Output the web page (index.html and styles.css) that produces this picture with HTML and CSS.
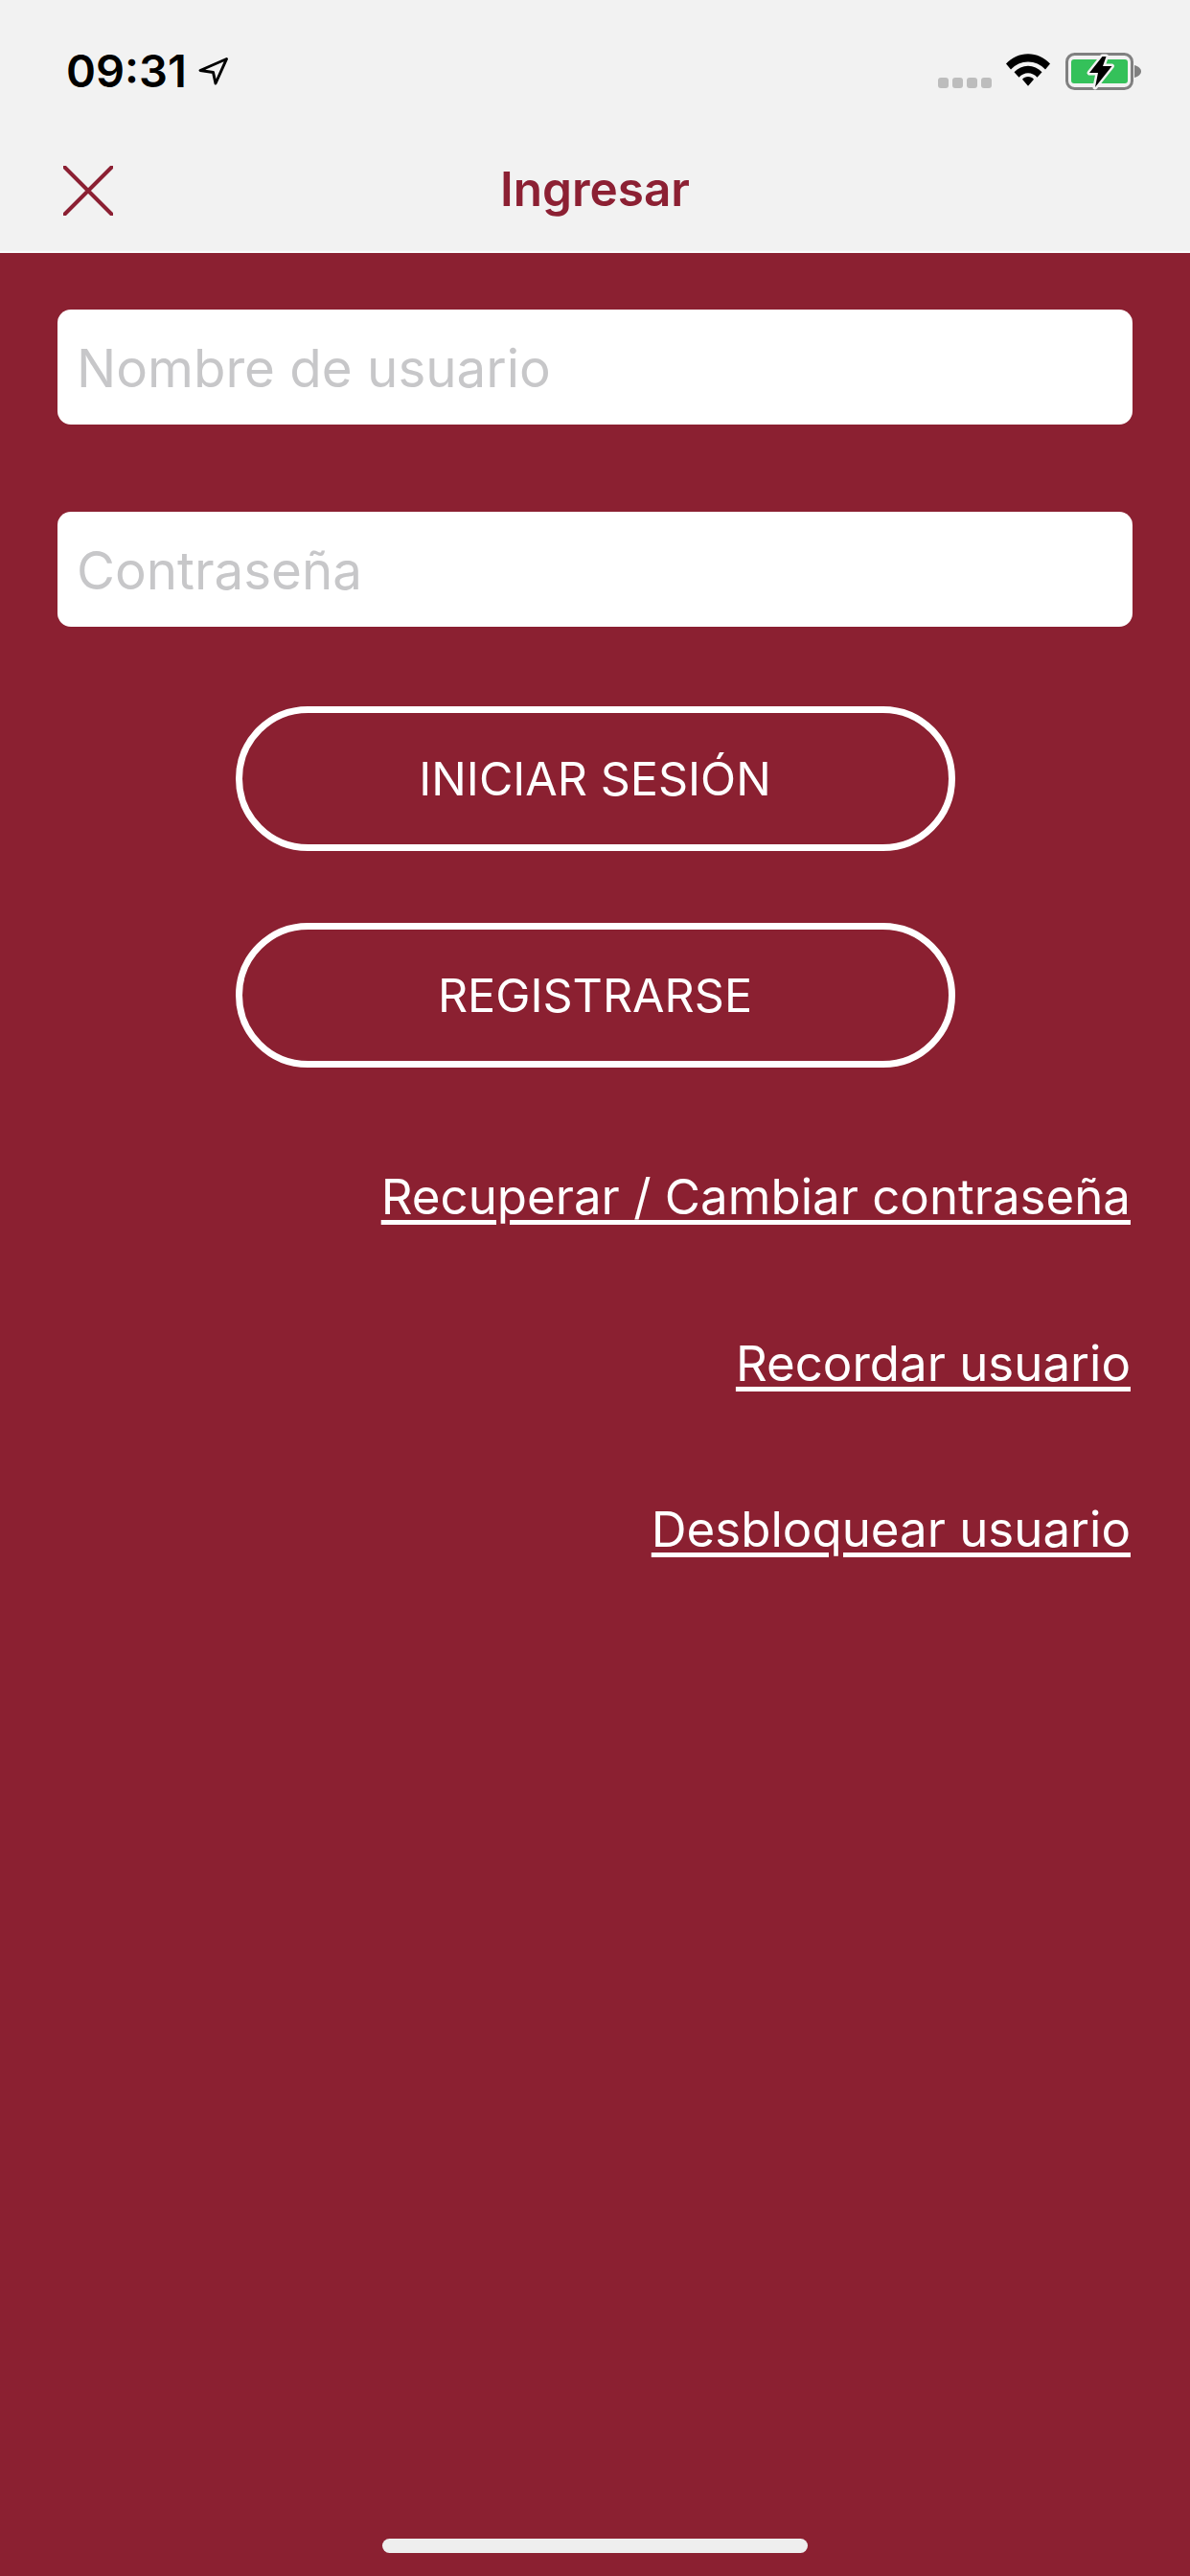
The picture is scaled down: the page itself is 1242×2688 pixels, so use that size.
FILE: index.html
```html
<!DOCTYPE html>
<html lang="es">
<head>
<meta charset="utf-8">
<title>Ingresar</title>
<link rel="stylesheet" href="styles.css">
</head>
<body>
<div class="screen">
  <header class="top">
    <div class="status">
      <div class="status-left">
        <span class="time">09:31</span>
        <svg class="arrow" viewBox="0 0 36 36" width="36" height="36"><path d="M31.500 4.500L4 16.500L17.500 18.500L20 30Z" fill="none" stroke="#000" stroke-width="3" stroke-linejoin="round"/></svg>
      </div>
      <div class="status-right">
        <div class="signal"><i></i><i></i><i></i><i></i></div>
        <svg class="wifi" viewBox="0 0 48 36" width="48" height="39" preserveAspectRatio="none"><path d="M24 3C15 3 7 6.500 1 12.500L6 18C11 13 17 10.500 24 10.500S37 13 42 18L47 12.500C41 6.500 33 3 24 3Z M24 14.500C18.500 14.500 13.500 16.500 9.500 20.500L14.500 25.500C17 23 20.500 21.500 24 21.500S31 23 33.500 25.500L38.500 20.500C34.500 16.500 29.500 14.500 24 14.500Z M24 25C21.500 25 19.500 26 18 27.500L24 34L30 27.500C28.500 26 26.500 25 24 25Z" fill="#000"/></svg>
        <svg class="battery" viewBox="0 0 82 44" width="82" height="44">
          <rect x="3.500" y="3.500" width="68" height="36" rx="8" fill="none" stroke="#808080" stroke-width="3"/>
          <rect x="8" y="9" width="59" height="25" rx="3" fill="#34c15a"/>
          <path d="M74 15C78 16 81 18.500 81 21.500S78 27 74 28Z" fill="#808080"/>
          <path d="M40.500 6L27 23H36L33 38L50.500 16H41L44.500 6Z" fill="#000" stroke="#f2f2f2" stroke-width="5" stroke-linejoin="round" paint-order="stroke"/>
        </svg>
      </div>
    </div>
    <nav class="nav">
      <svg class="close" viewBox="0 0 52 52" width="52" height="52"><path d="M1.500 1.500L50.500 50.500M50.500 1.500L1.500 50.500" stroke="#8c2033" stroke-width="4" stroke-linecap="round"/></svg>
      <h1 class="title">Ingresar</h1>
    </nav>
  </header>
  <main class="body">
    <div class="fields">
      <div class="field">Nombre de usuario</div>
      <div class="field">Contraseña</div>
    </div>
    <div class="actions">
      <a class="pill">INICIAR SESIÓN</a>
      <a class="pill">REGISTRARSE</a>
    </div>
    <div class="links">
      <a class="link">Recuperar / Cambiar contraseña</a>
      <a class="link">Recordar usuario</a>
      <a class="link">Desbloquear usuario</a>
    </div>
    <div class="home"></div>
  </main>
</div>
</body>
</html>
```
FILE: styles.css
```css
* { box-sizing: border-box; }
html, body { margin: 0; padding: 0; }
body { width: 1242px; height: 2688px; overflow: hidden; font-family: Inter, "Liberation Sans", sans-serif; }
.screen { width: 1242px; height: 2688px; display: flex; flex-direction: column; background: #8b2031; }
.top { height: 264px; background: #f2f2f2; border-bottom: 2px solid #fafafa; flex: none; display: flex; flex-direction: column; }
.status { height: 132px; padding: 0 50px 0 69px; display: flex; justify-content: space-between; align-items: flex-start; }
.status-left { display: flex; align-items: center; gap: 10px; padding-top: 47px; }
.time { font-size: 47px; line-height: 54px; font-weight: 600; color: #000; }
.arrow { margin-top: 2px; }
.status-right { display: flex; align-items: flex-start; padding-top: 53px; }
.signal { display: flex; gap: 4px; margin: 28px 14px 0 0; }
.signal i { width: 11px; height: 11px; border-radius: 3px; background: #bdbdbd; }
.wifi { margin-right: 13px; }
.nav { position: relative; flex: 1; display: flex; align-items: center; justify-content: center; }
.close { position: absolute; left: 66px; top: 41px; }
.title { margin: 0; font-size: 49.500px; line-height: 56px; font-weight: 600; color: #8c2033; }
.body { position: relative; flex: 1; padding: 59px 60px 0; display: flex; flex-direction: column; }
.fields { display: flex; flex-direction: column; gap: 91px; }
.field { height: 120px; background: #fff; border-radius: 14px; padding: 1px 20px 0; display: flex; align-items: center; font-size: 54.700px; color: #c7c7c9; }
.actions { display: flex; flex-direction: column; align-items: center; gap: 75px; margin-top: 83px; }
.pill { width: 751px; height: 151px; border: 7px solid #fff; border-radius: 76px; display: flex; align-items: center; justify-content: center; font-size: 48.500px; color: #fff; }
.links { display: flex; flex-direction: column; align-items: flex-end; gap: 113.500px; margin-top: 105px; padding-right: 2px; }
.link { font-size: 51px; line-height: 60px; color: #fff; text-decoration: underline; text-decoration-thickness: 5px; text-underline-offset: 6px; }
.home { position: absolute; left: 399px; bottom: 24px; width: 444px; height: 15px; border-radius: 8px; background: #eeeeee; }
```
